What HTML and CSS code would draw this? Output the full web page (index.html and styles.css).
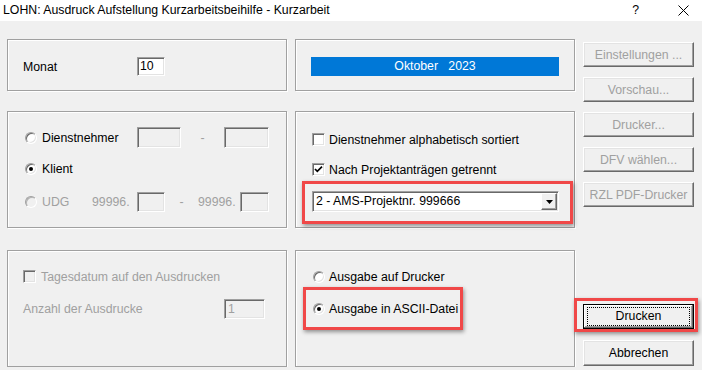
FILE: index.html
```html
<!DOCTYPE html>
<html lang="de">
<head>
  <meta charset="UTF-8" />
  <meta name="viewport" content="width=device-width, initial-scale=1.0" />
  <title>LOHN: Ausdruck Aufstellung Kurzarbeitsbeihilfe - Kurzarbeit</title>
  <link rel="stylesheet" href="styles.css">
</head>
<body>
  <div class="titlebar">
    <span class="title">LOHN: Ausdruck Aufstellung Kurzarbeitsbeihilfe - Kurzarbeit</span>
    <span class="help">?</span>
    <svg class="close" width="11" height="11" viewBox="0 0 11 11"><path d="M0.5 0.5 L10.5 10.5 M10.5 0.5 L0.5 10.5" /></svg>
  </div>

  <div class="dialog">
    <div class="groups">
      <div class="group g-monat">
        <span class="monat-lbl">Monat</span>
        <span class="field f-monat">10</span>
      </div>
      <div class="group g-period">
        <div class="period-bar">Oktober   2023</div>
      </div>

      <div class="group g-select row2">
        <div class="row">
          <span class="radio"></span>
          <span class="sel-lbl">Dienstnehmer</span>
          <span class="field off f-dn"></span>
          <span class="dash">-</span>
          <span class="field off f-dn2"></span>
        </div>
        <div class="row r-klient">
          <span class="radio on"></span>
          <span>Klient</span>
        </div>
        <div class="row r-udg muted">
          <span class="radio off"></span>
          <span class="udg-lbl">UDG</span>
          <span class="udg-pre">99996.</span>
          <span class="field off f-udg"></span>
          <span class="dash udg-dash">-</span>
          <span class="udg-pre2">99996.</span>
          <span class="field off f-udg2"></span>
        </div>
      </div>

      <div class="group g-options row2">
        <div class="row">
          <span class="check"></span>
          <span>Dienstnehmer alphabetisch sortiert</span>
        </div>
        <div class="row r-proj">
          <span class="check"><svg width="11" height="11" viewBox="0 0 11 11"><path d="M2 5 L4.3 7.4 L9 2.6" /></svg></span>
          <span>Nach Projektanträgen getrennt</span>
        </div>
        <div class="combo marked">
          <span class="combo-text">2 - AMS-Projektnr. 999666</span>
          <span class="combo-btn"><svg width="7" height="4" viewBox="0 0 7 4"><path d="M0 0 H7 L3.5 4 Z" /></svg></span>
        </div>
      </div>

      <div class="group g-print row3">
        <div class="row muted">
          <span class="check off"></span>
          <span>Tagesdatum auf den Ausdrucken</span>
        </div>
        <div class="row r-anzahl muted">
          <span class="anzahl-lbl">Anzahl der Ausdrucke</span>
          <span class="field off f-anzahl">1</span>
        </div>
      </div>

      <div class="group g-output row3">
        <div class="row">
          <span class="radio"></span>
          <span>Ausgabe auf Drucker</span>
        </div>
        <div class="row r-ascii">
          <label class="choice marked">
            <span class="radio on"></span>
            <span>Ausgabe in ASCII-Datei</span>
          </label>
        </div>
      </div>
    </div>

    <div class="actions">
      <button class="btn" disabled>Einstellungen ...</button>
      <button class="btn" disabled>Vorschau...</button>
      <button class="btn" disabled>Drucker...</button>
      <button class="btn" disabled>DFV wählen...</button>
      <button class="btn" disabled>RZL PDF-Drucker</button>
      <button class="btn btn-default marked"><span class="focus">Drucken</span></button>
      <button class="btn btn-cancel">Abbrechen</button>
    </div>
  </div>
</body>
</html>
```

FILE: styles.css
```css
body {
  margin: 0;
  background: #f0f0f0;
  font-family: "Liberation Sans", Arial, sans-serif;
  font-size: 12.3px;
  color: #000;
}

/* title bar */
.titlebar {
  height: 21px;
  background: #fff;
  display: flex;
  align-items: center;
  padding: 0 13px 0 3px;
  line-height: 21px;
}
.help {
  margin-left: auto;
}
.close {
  margin-left: 39px;
  fill: none;
  stroke: #000;
  stroke-width: 1;
}

/* dialog body */
.dialog {
  display: flex;
  padding: 18px 0 0 7px;
}
.groups {
  display: grid;
  grid-template-columns: 280px 280px;
  column-gap: 8px;
}
.group {
  box-sizing: border-box;
  border: 1px solid #a0a0a0;
  box-shadow: inset 1px 1px 0 #fff, 1px 1px 0 #fff;
}
.g-monat, .g-period {
  height: 52px;
}
.row2 {
  height: 117px;
  margin-top: 20px;
}
.row3 {
  height: 117px;
  margin-top: 22px;
}

.row {
  display: flex;
  align-items: center;
  height: 21px;
}
.muted {
  color: #a0a0a0;
}

/* Monat */
.g-monat {
  display: flex;
  align-items: center;
  padding: 3px 0 0 15px;
}
.monat-lbl {
  width: 114px;
}

/* period */
.g-period {
  padding: 17px 0 0 15px;
}
.period-bar {
  width: 248px;
  height: 19px;
  line-height: 19px;
  background: #0078d7;
  color: #fff;
  text-align: center;
  white-space: pre;
}

/* text fields */
.field {
  box-sizing: border-box;
  display: inline-block;
  height: 20px;
  line-height: 18px;
  padding-left: 2px;
  background: #fff;
  border: 1px solid;
  border-color: #a0a0a0 #fff #fff #a0a0a0;
  box-shadow: inset 1px 1px 0 #696969, inset -1px -1px 0 #e3e3e3;
}
.field.off {
  background: #f0f0f0;
  color: #a0a0a0;
}
.f-monat { width: 28px; height: 19px; line-height: 17px; }
.f-dn { width: 44px; height: 21px; }
.f-dn2 { width: 45px; height: 21px; }
.f-udg { width: 28px; }
.f-udg2 { width: 29px; }
.f-anzahl { width: 41px; }

/* radios and checks */
.radio {
  box-sizing: border-box;
  width: 12px;
  height: 12px;
  flex: none;
  border-radius: 50%;
  border: 1px solid;
  border-color: #a0a0a0 #fff #fff #a0a0a0;
  background: #fff;
  box-shadow: inset 1px 1px 0 #696969, inset -1px -1px 0 #e3e3e3;
}
.radio.on::after {
  content: "";
  display: block;
  width: 4px;
  height: 4px;
  margin: 3px;
  border-radius: 50%;
  background: #000;
}
.radio.off {
  background: #f0f0f0;
  box-shadow: inset 1px 1px 0 #b4b4b4;
}
.check {
  box-sizing: border-box;
  width: 13px;
  height: 13px;
  flex: none;
  margin-right: 4px;
  border: 1px solid;
  border-color: #a0a0a0 #fff #fff #a0a0a0;
  background: #fff;
  box-shadow: inset 1px 1px 0 #696969, inset -1px -1px 0 #e3e3e3;
}
.check svg {
  display: block;
  fill: none;
  stroke: #000;
  stroke-width: 1.7;
}
.check.off {
  background: #f0f0f0;
}

/* selection group */
.g-select {
  padding: 15px 0 0 17px;
}
.g-select .radio {
  margin-right: 5px;
}
.r-klient { margin-top: 10px; }
.r-udg { margin-top: 12px; }
.sel-lbl { width: 95px; }
.dash {
  width: 43px;
  text-align: center;
  color: #a0a0a0;
}
.udg-lbl { width: 50px; }
.udg-pre { width: 45px; }
.udg-dash { width: 33px; }
.udg-pre2 { width: 42px; }

/* options group */
.g-options {
  padding: 17px 0 0 16px;
}
.r-proj { margin-top: 9px; }
.combo {
  box-sizing: border-box;
  display: flex;
  width: 247px;
  height: 21px;
  margin-top: 11px;
  padding: 1px;
  background: #fff;
  border: 1px solid;
  border-color: #a0a0a0 #fff #fff #a0a0a0;
  box-shadow: inset 1px 1px 0 #696969, inset -1px -1px 0 #e3e3e3;
}
.combo-text {
  flex: 1;
  line-height: 17px;
  padding-left: 2px;
}
.combo-btn {
  box-sizing: border-box;
  width: 16px;
  display: flex;
  align-items: center;
  justify-content: center;
  background: #f0f0f0;
  border: 1px solid;
  border-color: #fff #696969 #696969 #fff;
  box-shadow: inset -1px -1px 0 #a0a0a0;
}
.combo-btn svg {
  fill: #000;
}

/* print group */
.g-print {
  padding: 15px 0 0 15px;
}
.g-print .check {
  margin-right: 5px;
}
.r-anzahl { margin-top: 11px; }
.anzahl-lbl { width: 201px; }
.f-anzahl { padding-left: 3px; }

/* output group */
.g-output {
  padding: 15px 0 0 17px;
}
.r-ascii { margin-top: 11px; }
.g-output .radio {
  margin-right: 4px;
}
.choice {
  display: inline-flex;
  align-items: center;
  height: 21px;
}

/* buttons */
.actions {
  display: flex;
  flex-direction: column;
  width: 111px;
  margin-left: 8px;
  padding-top: 3px;
  gap: 10px;
}
.btn {
  box-sizing: border-box;
  height: 25px;
  padding: 0;
  font: inherit;
  color: #000;
  background: #f0f0f0;
  border: 1px solid;
  border-color: #fff #696969 #696969 #fff;
  box-shadow: inset -1px -1px 0 #a0a0a0, inset 1px 1px 0 #e3e3e3;
}
.btn:disabled {
  color: #a0a0a0;
}
.btn-default {
  margin-top: 87px;
  border: 1px solid #000;
  box-shadow: inset -1px -1px 0 #696969, inset 1px 1px 0 #fff, inset -2px -2px 0 #a0a0a0;
}
.btn-default .focus {
  display: block;
  margin: 0 3px;
  height: 17px;
  line-height: 17px;
  border: 1px dotted #000;
}
.btn-cancel {
  margin-top: 1px;
  height: 26px;
}

/* red annotation frames */
.marked {
  position: relative;
}
.marked::after {
  content: "";
  position: absolute;
  border: 3px solid #f04848;
  box-shadow: 1px 2px 4px rgba(0, 0, 0, 0.4);
}
.combo.marked::after {
  left: -11px;
  top: -11px;
  right: -15px;
  bottom: -13px;
}
.choice.marked::after {
  left: -10px;
  top: -11px;
  right: -5px;
  bottom: -11px;
}
.btn-default.marked::after {
  left: -10px;
  top: -7px;
  right: -5px;
  bottom: -4px;
}
```
